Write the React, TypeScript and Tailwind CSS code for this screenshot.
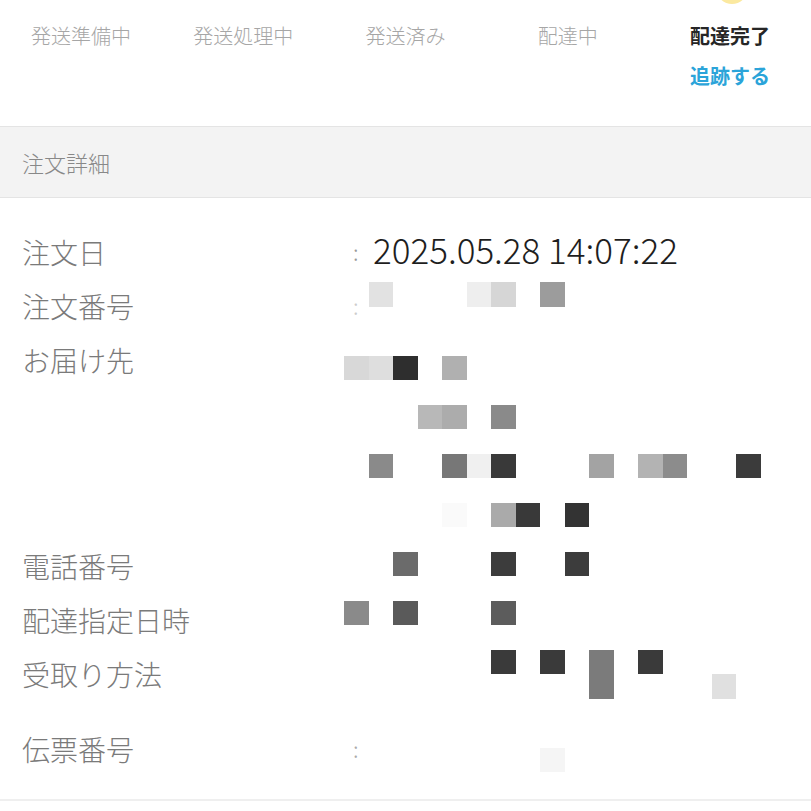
import React from "react";

const steps = ["発送準備中", "発送処理中", "発送済み", "配達中", "配達完了"];

type Cell = { r: number; c: number; color: string; span?: number };

const cells: Cell[] = [
  { r: 0, c: 1, color: "#e2e2e2" },
  { r: 0, c: 5, color: "#eeeeee" },
  { r: 0, c: 6, color: "#d6d6d6" },
  { r: 0, c: 8, color: "#9c9c9c" },
  { r: 3, c: 0, color: "#d8d8d8" },
  { r: 3, c: 1, color: "#dedede" },
  { r: 3, c: 2, color: "#2e2e2e" },
  { r: 3, c: 4, color: "#b0b0b0" },
  { r: 5, c: 3, color: "#b8b8b8" },
  { r: 5, c: 4, color: "#acacac" },
  { r: 5, c: 6, color: "#8a8a8a" },
  { r: 7, c: 1, color: "#8a8a8a" },
  { r: 7, c: 4, color: "#777777" },
  { r: 7, c: 5, color: "#f0f0f0" },
  { r: 7, c: 6, color: "#393939" },
  { r: 7, c: 10, color: "#a3a3a3" },
  { r: 7, c: 12, color: "#b3b3b3" },
  { r: 7, c: 13, color: "#8c8c8c" },
  { r: 7, c: 16, color: "#3b3b3b" },
  { r: 9, c: 4, color: "#fafafa" },
  { r: 9, c: 6, color: "#aaaaaa" },
  { r: 9, c: 7, color: "#393939" },
  { r: 9, c: 9, color: "#333333" },
  { r: 11, c: 2, color: "#6b6b6b" },
  { r: 11, c: 6, color: "#3c3c3c" },
  { r: 11, c: 9, color: "#3c3c3c" },
  { r: 13, c: 0, color: "#8a8a8a" },
  { r: 13, c: 2, color: "#5a5a5a" },
  { r: 13, c: 6, color: "#5c5c5c" },
  { r: 15, c: 6, color: "#3a3a3a" },
  { r: 15, c: 8, color: "#3a3a3a" },
  { r: 15, c: 10, color: "#7b7b7b", span: 2 },
  { r: 15, c: 12, color: "#3a3a3a" },
  { r: 16, c: 15, color: "#e0e0e0" },
  { r: 19, c: 8, color: "#f5f5f5" },
];

function Label({ children, h }: { children: React.ReactNode; h: string }) {
  return <div className={`${h} flex items-start`}>{children}</div>;
}

export default function App() {
  const font = { fontFamily: '"Noto Sans CJK JP", "Noto Sans", sans-serif' };
  return (
    <div
      className="relative w-[811px] h-[811px] overflow-hidden bg-white"
      style={font}
    >
      <div className="absolute left-[716px] top-[-28px] w-[32px] h-[32px] rounded-full bg-[#fbe9a0]" />

      {/* status steps */}
      <div className="grid grid-cols-5 h-[126px] pt-[20px]">
        {steps.map((s, i) => (
          <div key={s} className="flex flex-col items-center">
            <span
              className={
                i === 4
                  ? "text-[20px] leading-[32px] font-bold text-[#262626]"
                  : "text-[20px] leading-[32px] font-light text-[#a6a6a6]"
              }
            >
              {s}
            </span>
            {i === 4 && (
              <span className="mt-[9px] text-[20px] leading-[30px] font-bold text-[#2ba4d9]">
                追跡する
              </span>
            )}
          </div>
        ))}
      </div>

      {/* section header */}
      <div className="h-[72px] border-y border-[#e4e4e4] bg-[#f3f3f3] flex items-center px-[22px]">
        <span className="text-[22px] font-light text-[#888888]">注文詳細</span>
      </div>

      {/* details */}
      <div className="relative h-[603px] border-b-2 border-[#efefef] pt-[33px]">
        <div className="flex text-[28px] font-light text-[#7a7a7a]">
          <div className="w-[344px] pl-[22px] flex flex-col">
            <Label h="h-[54px]">注文日</Label>
            <Label h="h-[54px]">注文番号</Label>
            <Label h="h-[206px]">お届け先</Label>
            <Label h="h-[54px]">電話番号</Label>
            <Label h="h-[54px]">配達指定日時</Label>
            <Label h="h-[75px]">受取り方法</Label>
            <Label h="h-[54px]">伝票番号</Label>
          </div>
          <div className="flex-1 flex flex-col">
            <div className="h-[54px] flex items-start">
              <span className="w-[29px] pl-[9px] text-[22px] leading-[40px] text-[#999999]">:</span>
              <span className="text-[35px] leading-[40px] font-light text-[#1e1e1e] -mt-[2px]">
                2025.05.28 14:07:22
              </span>
            </div>
            <div className="h-[54px] flex items-start">
              <span className="w-[29px] pl-[9px] text-[22px] leading-[40px] text-[#cccccc]">:</span>
            </div>
            <div className="h-[206px]" />
            <div className="h-[54px]" />
            <div className="h-[54px]" />
            <div className="h-[75px]" />
            <div className="h-[54px] flex items-start">
              <span className="w-[29px] pl-[9px] text-[22px] leading-[40px] text-[#aaaaaa]">:</span>
            </div>
          </div>
        </div>

        {/* censor mosaic overlay */}
        <div className="absolute left-[344px] top-[84px] grid grid-cols-[repeat(18,24.5px)] grid-rows-[repeat(21,24.5px)]">
          {cells.map((cell, i) => (
            <div
              key={i}
              style={{
                gridColumn: `${cell.c + 1}`,
                gridRow: `${cell.r + 1} / span ${cell.span ?? 1}`,
                backgroundColor: cell.color,
              }}
            />
          ))}
        </div>
      </div>
    </div>
  );
}
